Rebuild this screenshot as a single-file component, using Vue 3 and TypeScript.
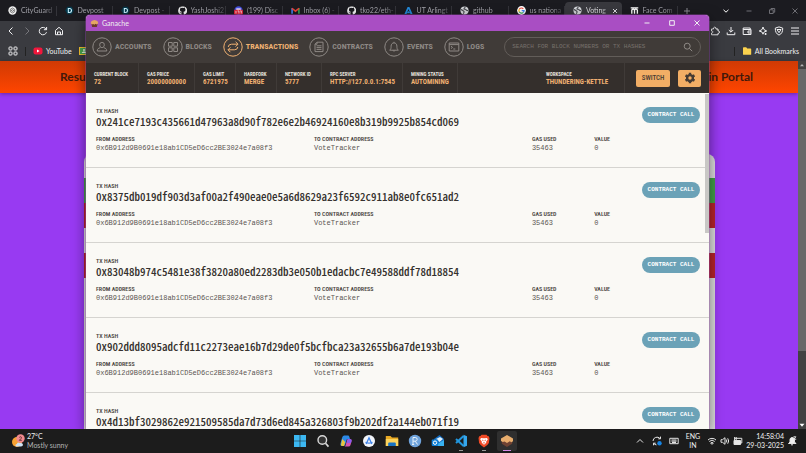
<script setup lang="ts">
interface Tab { title: string; icon: string; active?: boolean }
interface NavItem { label: string; paths: string; active?: boolean }
interface Stat { label: string; value: string }

const tabs: Tab[] = [
  { title: 'CityGuard', icon: 'gpt' },
  { title: 'Devpost', icon: 'devpost' },
  { title: 'Devpost -', icon: 'devpost' },
  { title: 'YashJoshi2', icon: 'github' },
  { title: '(199) Disc', icon: 'badge' },
  { title: 'Inbox (6) -', icon: 'gmail' },
  { title: 'tko22/eth-', icon: 'github' },
  { title: 'UT Arlingt', icon: 'uta' },
  { title: 'github', icon: 'globe' },
  { title: 'us nationa', icon: 'google' },
  { title: 'Voting', icon: 'globe', active: true },
  { title: 'Face Com', icon: 'face' },
]

const nav: NavItem[] = [
  { label: 'Accounts', paths: 'M10 5.4a2.3 2.3 0 0 1 2.3 2.5c0 1.5-1 2.7-2.3 2.7s-2.3-1.2-2.3-2.7A2.3 2.3 0 0 1 10 5.4ZM8.4 10.6c-2 .7-3 1-3.2 3.4h9.6c-.2-2.4-1.2-2.7-3.2-3.4' },
  { label: 'Blocks', paths: 'M5.5 5.5h3.7v3.7H5.5zM10.8 5.5h3.7v3.7h-3.7zM5.5 10.8h3.7v3.7H5.5zM10.8 10.8h3.7v3.7h-3.7z' },
  { label: 'Transactions', paths: 'M12.6 4.8l2.4 2.4-2.4 2.4M15 7.2H8.600Q5.400 7.200 5.200 10M7.400 10.400L5 12.800l2.400 2.400M5 12.800h6.400q3.200 0 3.400-2.800', active: true },
  { label: 'Contracts', paths: 'M8 5.2h6v9.4H6V7.2zM8 5.2v2H6M7.500 8.800h5M7.500 10.600h5M7.500 12.400h5' },
  { label: 'Events', paths: 'M10 4.8v1M5.600 13.200c1.400-1.200 1.500-2 1.500-4 0-2 1.100-3.300 2.900-3.300s2.900 1.300 2.900 3.300c0 2 .1 2.800 1.500 4zM8.900 13.400a1.200 1.200 0 0 0 2.200 0' },
  { label: 'Logs', paths: 'M5.2 6h9.6v8H5.200zM5.200 7.600h9.600M7 9.200l1.500 1.200L7 11.600M9.300 12h2' },
]

const stats: Stat[] = [
  { label: 'Current Block', value: '72' },
  { label: 'Gas Price', value: '20000000000' },
  { label: 'Gas Limit', value: '6721975' },
  { label: 'Hardfork', value: 'MERGE' },
  { label: 'Network ID', value: '5777' },
  { label: 'RPC Server', value: 'HTTP://127.0.0.1:7545' },
  { label: 'Mining Status', value: 'AUTOMINING' },
  { label: 'Workspace', value: 'THUNDERING-KETTLE' },
]

const sender = '0x6B912d9B0691e18ab1CD5eD6cc2BE3024e7a08f3'
const hashes = [
  '0x241ce7193c435661d47963a8d90f782e6e2b46924160e8b319b9925b854cd069',
  '0x8375db019df903d3af00a2f490eae0e5a6d8629a23f6592c911ab8e0fc651ad2',
  '0x83048b974c5481e38f3820a80ed2283db3e050b1edacbc7e49588ddf78d18854',
  '0x902ddd8095adcfd11c2273eae16b7d29de0f5bcfbca23a32655b6a7de193b04e',
  '0x4d13bf3029862e921509585da7d73d6ed845a326803f9b202df2a144eb071f19',
]
</script>

<template>
  <div class="desktop">
    <div class="workspace">
      <div class="browser">
        <header class="tabbar">
          <div class="tabs">
            <div v-for="(tab, i) in tabs" :key="i" class="tab" :class="{ active: tab.active }">
              <svg class="favicon" viewBox="0 0 10 10">
                <template v-if="tab.icon === 'gpt'">
                  <circle cx="5" cy="5" r="4.6" fill="#f1f1f1" />
                  <path d="M5 2.200l2.400 1.400v2.800L5 7.800 2.600 6.400V3.600zM5 3.800l1 .6v1.200l-1 .6-1-.6V4.400z" fill="none" stroke="#444" stroke-width=".7" />
                </template>
                <template v-else-if="tab.icon === 'devpost'">
                  <path d="M2.600.8h4.800L9.800 5 7.400 9.200H2.600L.2 5z" fill="#063a4c" />
                  <path d="M3.700 2.800H5a2.200 2.200 0 0 1 0 4.400H3.700z" fill="none" stroke="#c9f2ff" stroke-width="1.2" />
                </template>
                <path v-else-if="tab.icon === 'github'" d="M5 .5a4.600 4.600 0 0 0-1.500 9c.3 0 .4-.2.400-.4v-1c-1.200.3-1.600-.4-1.700-.9-.2-.4-.5-.6-.8-.8.500-.2.900.1 1.200.6.300.5.800.5 1.400.3 0-.3.200-.6.400-.7-1.500-.2-2.300-.9-2.300-2.300 0-.6.200-1.100.6-1.500-.1-.4 0-.9.100-1.200.5 0 1 .3 1.300.5a4 4 0 0 1 2.200 0c.4-.2.800-.5 1.300-.5.200.4.200.9.100 1.200.4.400.6.900.6 1.500 0 1.400-.8 2.100-2.300 2.300.3.200.4.600.4 1.100v1.400c0 .2.100.4.400.4A4.600 4.600 0 0 0 5 .5" fill="#f2f2f2" />
                <template v-else-if="tab.icon === 'badge'">
                  <circle cx="5" cy="5" r="4.6" fill="#4450e0" />
                  <path d="M2.500 2.600h5v2h-5z" fill="#e8e8ff" />
                  <rect y="4.3" width="10" height="5.2" rx="1.5" fill="#e22438" />
                  <path d="M2.200 5.500v2.800M4 5.500h1.500v2.800M6.900 5.500h1.200v2.800" stroke="#fff" stroke-width=".8" fill="none" />
                </template>
                <template v-else-if="tab.icon === 'gmail'">
                  <path d="M1.200 8.500V2.600" stroke="#4285f4" stroke-width="1.8" />
                  <path d="M8.800 8.500V2.600" stroke="#34a853" stroke-width="1.8" />
                  <path d="M1 2.500l4 3.300 4-3.300" stroke="#ea4335" stroke-width="1.8" fill="none" />
                </template>
                <path v-else-if="tab.icon === 'uta'" d="M.5 9L4 1h2l3.500 8H7.200L5 3.400 2.800 9zM5 5.500L7 8H3z" fill="#2389d8" />
                <template v-else-if="tab.icon === 'globe'">
                  <circle cx="5" cy="5" r="4.5" fill="#d4d6da" />
                  <path d="M1 4c2 0 1.600 1.500 3 1.700.9.300.5 1.600-.3 2.900M5.800 1C5.500 2.500 4 2.300 4.400 3.300s2-.3 2.200.8c.2 1.200 1.200.9 2.300 1" fill="none" stroke="#45474c" stroke-width="1.2" />
                </template>
                <template v-else-if="tab.icon === 'google'">
                  <circle cx="5" cy="5" r="4.9" fill="#fff" />
                  <path d="M7 3A2.900 2.900 0 0 0 2.500 3.700" stroke="#ea4335" fill="none" stroke-width="1.3" />
                  <path d="M2.500 3.700a2.900 2.900 0 0 0 0 2.700" stroke="#fbbc04" fill="none" stroke-width="1.3" />
                  <path d="M2.500 6.400A2.900 2.900 0 0 0 7 7.100" stroke="#34a853" fill="none" stroke-width="1.3" />
                  <path d="M7 7.100Q7.900 6.400 7.900 5.100H5.200" stroke="#4285f4" fill="none" stroke-width="1.3" />
                </template>
                <path v-else d="M2 8.500V4.600q0-1.200 1.500-1.200T5 4.600v3.900M5 4.600q0-1.200 1.500-1.200T8.200 4.600v3.900M.8 2h8.400" fill="none" stroke="#fff" stroke-width="1.5" />
              </svg>
              <span class="tab-title">{{ tab.title }}</span>
              <button v-if="tab.active" class="tab-close" aria-label="Close tab">
                <svg viewBox="0 0 6 6"><path d="M1 1l4 4M5 1L1 5" /></svg>
              </button>
            </div>
            <button class="new-tab" aria-label="New tab">
              <svg viewBox="0 0 8 8"><path d="M4 1v6M1 4h6" /></svg>
            </button>
          </div>
          <div class="frame-controls">
            <button class="bright" aria-label="Search tabs"><svg viewBox="0 0 8 8"><path d="M1.500 2.800L4 5.200l2.500-2.400" /></svg></button>
            <button aria-label="Minimize browser"><svg viewBox="0 0 8 8"><path d="M1.500 4h5" /></svg></button>
            <button aria-label="Restore browser"><svg viewBox="0 0 8 8"><path d="M1.500 2.800h3.700v3.700H1.500zM3 2.800V1.500h3.700v3.700H5.200" /></svg></button>
            <button aria-label="Close browser"><svg viewBox="0 0 8 8"><path d="M1.500 1.500l5 5M6.500 1.500l-5 5" /></svg></button>
          </div>
        </header>

        <div class="toolbar">
          <div class="tools">
            <button aria-label="Back"><svg viewBox="0 0 10 10"><path d="M6.500 1.500L3 5l3.500 3.500" /></svg></button>
            <button class="dim" aria-label="Forward"><svg viewBox="0 0 10 10"><path d="M3.500 1.500L7 5 3.500 8.500" /></svg></button>
            <button aria-label="Reload"><svg viewBox="0 0 10 10"><path d="M8.300 3.500A3.700 3.700 0 1 0 8.500 6.200M8.600 1v2.700H5.900" /></svg></button>
            <button aria-label="Home"><svg viewBox="0 0 10 10"><path d="M1.500 4.400L5 1.300l3.500 3.100v4.300h-7zM3.500 8.700V6h3v2.700" /></svg></button>
          </div>
          <div class="tools">
            <button aria-label="Extensions"><svg viewBox="0 0 10 10"><path d="M1.500 3h2c-.5-2.400 3-2.400 2.500 0h2v2c2-.5 2 2.800 0 2.300v1.500H1.500V7c1.800.2 1.800-2.300 0-2z" /></svg></button>
            <button aria-label="Downloads"><svg viewBox="0 0 10 10"><path d="M5 1v5M2.800 4L5 6.200 7.200 4M1.200 6.500v2.200h7.600V6.500" /></svg></button>
            <button aria-label="Wallet"><svg viewBox="0 0 10 10"><path d="M1.200 2h7v1.500H9v5H1.200zM1.200 3.500h7M9 5H6v2h3" /></svg></button>
            <button aria-label="Leo"><svg viewBox="0 0 10 10"><path d="M5 1l1 2.600L8.700 5 6 6 5 8.200 4 6 1.200 5 4 3.600zM7.600 7v2M6.600 8h2" /></svg></button>
            <button aria-label="VPN"><svg viewBox="0 0 10 10"><path d="M5 .9l3.700 1.200c.1 3.500-.9 5.700-3.700 7C2.200 7.800 1.200 5.600 1.300 2.100zM3 3.500h4L5 6.700z" /></svg></button>
            <button aria-label="Menu"><svg viewBox="0 0 10 10"><path d="M1 2h8M1 5h8M1 8h8" /></svg></button>
          </div>
        </div>

        <div class="bookmarks">
          <div class="bookmark-group">
            <svg class="apps" viewBox="0 0 10 10"><rect x="1" y="1" width="3" height="3" rx=".8" /><rect x="6" y="1" width="3" height="3" rx=".8" /><rect x="1" y="6" width="3" height="3" rx=".8" /><rect x="6" y="6" width="3" height="3" rx=".8" /></svg>
            <i class="divider"></i>
            <a href="#">
              <svg viewBox="0 0 10 10"><rect x=".5" y="1.5" width="9" height="7" rx="2" fill="#f0173c" /><path d="M4 3.500L6.600 5 4 6.500z" fill="#fff" /></svg>
              YouTube
            </a>
            <a href="#" aria-label="Classroom">
              <svg viewBox="0 0 10 10"><path d="M0 1h10v8H0z" fill="#f2c230" /><path d="M1 2h8v6H1z" fill="#4aa84e" /><path d="M5 3a1 1 0 0 1 0 2 1 1 0 0 1 0-2M2.800 7c.3-2 4-2 4.400 0z" fill="#e8f5e0" /></svg>
            </a>
          </div>
          <div class="bookmark-group">
            <i class="divider"></i>
            <a href="#">
              <svg viewBox="0 0 10 10"><path d="M1 2q0-.7.7-.7h2.500l1 1.200h3.300q.7 0 .7.700v5q0 .6-.7.600H1.700Q1 8.800 1 8.200z" fill="#fbd24e" /></svg>
              All Bookmarks
            </a>
          </div>
        </div>

        <div class="viewport">
          <main class="page">
            <div class="page-header"><span>Results</span><span>Admin Portal</span></div>
            <section class="card">
              <div class="band green"></div>
              <div class="band red"></div>
              <div class="band"></div>
              <div class="band red"></div>
            </section>
          </main>
          <div class="page-scroll">
            <svg viewBox="0 0 8 8"><path d="M2 5.200L4 3l2 2.200z" /></svg>
            <div class="track"><div class="thumb"></div></div>
            <svg viewBox="0 0 8 8"><path d="M1.500 2.800h5L4 5.800z" /></svg>
          </div>
        </div>
      </div>

      <section class="ganache">
        <header class="titlebar">
          <svg class="app-icon" viewBox="0 0 10 10"><path d="M1.500 5h7L7.600 9H2.400z" fill="#6b3a2a" /><path d="M.8 4.800Q1 1.500 5 1q4 .5 4.200 3.800L7.500 6l-1.400-.6L5 6.400 3.500 5.500 2.200 6z" fill="#e5a663" /></svg>
          <span>Ganache</span>
          <div class="window-controls">
            <button aria-label="Minimize"><svg viewBox="0 0 8 8"><path d="M1.500 4h5" /></svg></button>
            <button aria-label="Maximize"><svg viewBox="0 0 8 8"><path d="M1.700 1.700h4.600v4.600H1.700z" /></svg></button>
            <button aria-label="Close"><svg viewBox="0 0 8 8"><path d="M1.500 1.500l5 5M6.500 1.500l-5 5" /></svg></button>
          </div>
        </header>

        <div class="appbar">
          <nav>
            <a v-for="item in nav" :key="item.label" href="#" :class="{ active: item.active }">
              <svg viewBox="0 0 20 20"><circle cx="10" cy="10" r="9.2" /><path :d="item.paths" /></svg>
              {{ item.label }}
            </a>
          </nav>
          <div class="search">
            <input type="text" aria-label="Search" placeholder="SEARCH FOR BLOCK NUMBERS OR TX HASHES" />
            <svg viewBox="0 0 10 10"><circle cx="4.2" cy="4.2" r="3" /><path d="M6.400 6.400L9.200 9.200" /></svg>
          </div>
        </div>

        <div class="status">
          <div v-for="s in stats" :key="s.label" class="stat">
            <span class="stat-label">{{ s.label }}</span>
            <span class="stat-value">{{ s.value }}</span>
          </div>
          <div class="actions">
            <button class="switch">SWITCH</button>
            <button class="settings" aria-label="Settings">
              <svg viewBox="0 0 12 12"><circle cx="6" cy="6" r="2.9" fill="none" stroke="#453b33" stroke-width="2.4" /><path d="M6 .8v2M6 9.200v2M1.500 3.400l1.700 1M8.800 7.600l1.700 1M1.500 8.600l1.700-1M8.800 4.400l1.700-1" stroke="#453b33" stroke-width="2.4" /></svg>
            </button>
          </div>
        </div>

        <div class="list">
          <article v-for="hash in hashes" :key="hash" class="tx">
            <div class="tx-top">
              <div>
                <div class="label">TX HASH</div>
                <div class="hash">{{ hash }}</div>
              </div>
              <span class="pill">CONTRACT CALL</span>
            </div>
            <div class="tx-details">
              <div>
                <div class="label">FROM ADDRESS</div>
                <div class="value">{{ sender }}</div>
              </div>
              <div>
                <div class="label">TO CONTRACT ADDRESS</div>
                <div class="value">VoteTracker</div>
              </div>
              <div>
                <div class="label">GAS USED</div>
                <div class="value">35463</div>
              </div>
              <div>
                <div class="label">VALUE</div>
                <div class="value">0</div>
              </div>
            </div>
          </article>
          <div class="list-thumb"></div>
        </div>
      </section>
    </div>

    <footer class="taskbar">
      <div class="weather">
        <svg viewBox="0 0 14 14"><circle cx="6" cy="8" r="5" fill="#f7a233" /><path d="M5 12.500q-1.500-2 .8-2.600 1-2.400 3.300-.8 2.800-.4 2.900 1.700 0 1.700-2 1.700z" fill="#cfe2f5" /><circle cx="9.5" cy="4.5" r="4.2" fill="#f08a8f" /><path d="M8.300 3.400q1.200-1.300 2.100-.2.500 1-2.100 3.100h2.500" stroke="#4b2226" fill="none" stroke-width=".8" /></svg>
        <div><div class="temp">27°C</div><div class="sky">Mostly sunny</div></div>
      </div>

      <div class="apps-row">
        <button aria-label="Start"><svg viewBox="0 0 14 14"><path d="M1 1h5.700v5.700H1zM7.300 1H13v5.700H7.300zM1 7.300h5.700V13H1zM7.300 7.300H13V13H7.300z" fill="#3cb8f2" /></svg></button>
        <button aria-label="Search"><svg viewBox="0 0 14 14"><circle cx="6.3" cy="6" r="4.3" fill="#333" stroke="#d8d8d8" stroke-width="1.4" /><path d="M9.500 9.300l3 3.300" stroke="#d8d8d8" stroke-width="1.7" /></svg></button>
        <button aria-label="Copilot"><svg viewBox="0 0 14 14"><path d="M5 1.500h4q1 0 1.400 1.400L11 5H8L6 11q-.4 1-1.400 1H3q-2 0-1.500-2.500L3 4q.6-2.500 2-2.500z" fill="#2c8ae8" /><path d="M3.200 5L2 10.500Q1.700 12 3.400 12H5l1.200-4z" fill="#e9c63d" /><path d="M8.500 5h2.600q1.800 0 1.500 2L11.500 11q-.5 1.500-2 1.500H5.500q.8-.3 1-1z" fill="#d553b3" /><path d="M9 5h2q1.800 0 1.600 1.500L12 9H7.700z" fill="#8b5cf0" /></svg></button>
        <button aria-label="Android Studio"><svg viewBox="0 0 14 14"><circle cx="7" cy="7" r="6" fill="#f2f5fa" /><path d="M4.200 10L7 3.800 9.800 10M3.500 8.300q3.500 1.500 7 0" stroke="#4285e8" stroke-width="1.3" fill="none" /></svg></button>
        <button aria-label="File Explorer"><svg viewBox="0 0 14 14"><path d="M.8 2h4.700L7 3.500h6.200V12H.8z" fill="#e9a924" /><path d="M.8 5h12.400v7H.8z" fill="#fcd35c" /><path d="M3.200 12V9.500q0-1 1-1h5.600q1 0 1 1V12z" fill="#1873c4" /></svg></button>
        <button aria-label="RStudio"><svg viewBox="0 0 14 14"><circle cx="7" cy="7" r="6.2" fill="#6fa3dc" /><path d="M5 10.500v-7h2.200q2 0 2 1.800T7.200 7.200H5M7.200 7.200l2.400 3.300M4 10.500h2.200" stroke="#e9f2fb" fill="none" /></svg></button>
        <button aria-label="Outlook"><svg viewBox="0 0 14 14"><path d="M3 5l5.500-4L13 5v7H3z" fill="#1369bd" /><path d="M5 5l4-2 3 2-3.500 3z" fill="#dff1fc" /><path d="M3 12l10-6v6z" fill="#38b2f2" /><rect x=".7" y="5.5" width="6.5" height="6.5" rx="1" fill="#1080d8" /><circle cx="4" cy="8.7" r="1.7" fill="none" stroke="#fff" /></svg></button>
        <button aria-label="Visual Studio Code" class="running"><svg viewBox="0 0 14 14"><path d="M9.600 2L2 9M9.600 12L2 5" stroke="#2196de" stroke-width="2" /><path d="M9.500.8L13 2.300v9.400l-3.500 1.500z" fill="#35a7ee" /></svg></button>
        <button aria-label="Brave" class="running"><svg viewBox="0 0 14 14"><path d="M4.500.8h5l1 1.200h1l1 2-.6 5Q11 11 7 13.400 3 11 2.100 9L1.500 4l1-2h1z" fill="#f04a26" /><path d="M4 4l2 .3h2L10 4l.8 1.500-1.700 2.300.2 1L7 10.800 4.700 8.800l.2-1-1.700-2.300z" fill="#fff" /><path d="M5 6l1.500.7M9 6l-1.500.7M6 8.500l1 .7 1-.7" stroke="#f04a26" fill="none" stroke-width=".8" /></svg></button>
        <button aria-label="Ganache" class="running current"><svg viewBox="0 0 14 14"><path d="M1.800 6.500h10.400v3.200L7 13 1.800 9.700z" fill="#6e4233" /><path d="M1 4.500L7 1l6 3.500v2.700l-1.700 1-1.500-1L7 9 4.600 7.500 2.800 8 1 7z" fill="#e8ad6d" /></svg></button>
      </div>

      <div class="tray">
        <svg viewBox="0 0 10 10"><path d="M2 6.500l3-3 3 3" /></svg>
        <svg class="gap" viewBox="0 0 10 10"><path d="M1 5A4 4 0 0 1 8 2.500M8.500.6v2.200H6.300M1.500 9.300V7.200h2.200M1.700 7.300a4 4 0 0 0 2.800 1.600" /><circle cx="7.5" cy="7.3" r="2.2" fill="#1584e4" stroke="none" /></svg>
        <svg class="gap" viewBox="0 0 10 10"><path d="M.8 2.300h8.400v5.400H.8zM2.500 4h5M2.500 5.200h5M3 6.500h4" /></svg>
        <div class="language"><div>ENG</div><div>IN</div></div>
        <svg viewBox="0 0 10 10"><path d="M1 4a5.700 5.700 0 0 1 8 0M2.300 5.500a3.800 3.800 0 0 1 5.400 0M3.700 7a1.900 1.900 0 0 1 2.600 0L5 8.400z" /></svg>
        <svg viewBox="0 0 10 10"><path d="M1 3.700h1.500L5 1.700v6.600L2.500 6.300H1zM6.300 3.500q1 1.500 0 3M7.700 2.300q2 2.700 0 5.400" /></svg>
        <svg viewBox="0 0 10 10"><path d="M1 4.500h6.500v4H1z" fill="#e8e8e8" /><path d="M2 2.300h6.800V7H8M1.600 1v3.500M3.200 1v3" /></svg>
        <div class="clock"><div>14:58:04</div><div>29-03-2025</div></div>
        <svg viewBox="0 0 10 10"><path d="M1.500 7.500L3 6V3.200q.4-1.500 2-1.700 2.300 0 2.500 2V6L9 7.500z" fill="#f0f0f0" /><path d="M4 8.800h2M6.500.8h2.400L6.700 3.200h2.500" /></svg>
      </div>
    </footer>
  </div>
</template>

<style>
body {
  margin: 0;
  background: #983af2;
}
</style>

<style scoped>
* {
  box-sizing: border-box;
}
.desktop {
  display: flex;
  flex-direction: column;
  height: 100vh;
  overflow: hidden;
  font-family: Lato, "Noto Sans", sans-serif;
  font-size: 7px;
  line-height: 9px;
  color: #f0f0f2;
}
button {
  display: grid;
  place-items: center;
  padding: 0;
  border: 0;
  background: none;
  color: inherit;
  font: inherit;
}
a {
  color: inherit;
  text-decoration: none;
}
svg {
  display: block;
  flex: none;
}
.workspace {
  position: relative;
  flex: 1;
  min-height: 0;
  overflow: hidden;
}
.browser {
  display: flex;
  flex-direction: column;
  height: 100%;
}
.tabbar {
  display: flex;
  justify-content: space-between;
  height: 21px;
  flex: none;
  background: #1b1b20;
}
.tabs {
  display: flex;
  align-items: center;
  min-width: 0;
  flex: 0 1 696px;
}
.tab {
  display: flex;
  align-items: center;
  gap: 4px;
  flex: 1 1 0;
  min-width: 0;
  height: 18px;
  padding: 0 4px 0 8px;
  background: linear-gradient(#34343a, #34343a) right center / 1px 10px no-repeat;
  color: #a3a3aa;
}
.tab.active {
  border-radius: 4px;
  background: #39393e;
  color: #dcdce0;
}
.favicon {
  width: 9px;
  height: 9px;
}
.tab-title {
  flex: 1;
  white-space: nowrap;
  mask-image: linear-gradient(90deg, #000 70%, #0005);
}
.tab-close svg {
  width: 6px;
  height: 6px;
}
.new-tab {
  width: 18px;
  color: #8a8a90;
}
.new-tab svg {
  width: 8px;
  height: 8px;
}
.tab-close svg,
.new-tab svg,
.frame-controls svg,
.tools svg,
.window-controls svg,
.apps {
  fill: none;
  stroke: currentColor;
  stroke-width: 1;
}
.frame-controls {
  display: flex;
  color: #6e6e74;
}
.frame-controls button {
  width: 23px;
}
.frame-controls svg {
  width: 8px;
  height: 8px;
}
.frame-controls .bright {
  color: #fff;
}
.toolbar,
.bookmarks {
  display: flex;
  align-items: center;
  justify-content: space-between;
  height: 20px;
  flex: none;
  padding: 0 3px;
  background: #3a3b40;
}
.tools {
  display: flex;
}
.tools button {
  width: 16px;
}
.tools svg {
  width: 10px;
  height: 10px;
}
.tools .dim {
  color: #77777c;
}
.bookmarks {
  padding: 0 7px 0 8px;
}
.bookmark-group,
.bookmark-group a {
  display: flex;
  align-items: center;
}
.bookmark-group {
  gap: 7px;
}
.bookmark-group a {
  gap: 3px;
}
.bookmark-group svg {
  width: 10px;
  height: 10px;
}
.divider {
  width: 1px;
  height: 9px;
  background: #222;
}
.viewport {
  display: flex;
  flex: 1;
  min-height: 0;
}
.page {
  display: flex;
  flex-direction: column;
  flex: 1;
  background: #983af2;
}
.page-header {
  display: flex;
  align-items: center;
  justify-content: space-between;
  height: 32px;
  padding: 0 45px 0 60px;
  background: linear-gradient(#cf3a04, #ff4500);
  color: #43190b;
  font: 700 12px/16px Lato, sans-serif;
  box-shadow: 0 1px 4px #0005;
}
.card {
  flex: 1;
  margin: 61px 83px 0 84px;
  padding-top: 24px;
  border-radius: 8px 8px 0 0;
  background: #dedede;
}
.band {
  height: 25px;
}
.green {
  background: #43a047;
}
.red {
  background: #b9252b;
}
.page-scroll {
  display: flex;
  flex-direction: column;
  width: 8px;
  background: #424242;
}
.page-scroll svg {
  width: 8px;
  height: 8px;
  fill: #b4b4b4;
}
.page-scroll svg:last-child {
  fill: #fff;
}
.track {
  flex: 1;
}
.thumb {
  height: 80%;
  background: #686868;
}

/* Ganache window floating above the browser */
.ganache {
  position: absolute;
  inset: 15px 97px 0 86px;
  display: flex;
  flex-direction: column;
  border-radius: 4px 4px 0 0;
  overflow: hidden;
  background: #faf9f5;
  box-shadow: 0 0 0 1px #a94fc455, 0 4px 14px #0008;
}
.titlebar {
  display: flex;
  align-items: center;
  gap: 3px;
  height: 16px;
  flex: none;
  padding-left: 4px;
  background: #a94ec3;
}
.app-icon {
  width: 9px;
  height: 9px;
}
.window-controls {
  display: flex;
  margin-left: auto;
}
.window-controls button {
  width: 25px;
  height: 16px;
}
.window-controls svg {
  width: 8px;
  height: 8px;
}
.appbar {
  display: flex;
  align-items: center;
  gap: 20px;
  height: 32px;
  flex: none;
  padding: 0 8px 0 6px;
  background: #403b38;
}
nav {
  display: flex;
  gap: 11px;
}
nav a {
  display: flex;
  align-items: center;
  gap: 3px;
  color: #8e8985;
  font: 700 8px/10px "Roboto Condensed", "Liberation Sans Narrow", Roboto, sans-serif;
  text-transform: uppercase;
}
nav a.active {
  color: #f0b172;
}
nav svg {
  width: 20px;
  height: 20px;
  fill: none;
  stroke: currentColor;
}
.search {
  display: flex;
  align-items: center;
  flex: 1;
  height: 20px;
  margin-left: auto;
  padding: 0 7px;
  border: 1px solid #625d59;
  border-radius: 10px;
}
.search input {
  flex: 1;
  min-width: 0;
  padding: 0;
  border: 0;
  outline: 0;
  background: none;
  color: #d8d2cc;
  font: 6px/8px "Liberation Mono", monospace;
}
.search input::placeholder {
  color: #76706b;
  opacity: 1;
}
.search svg {
  width: 10px;
  height: 10px;
  fill: none;
  stroke: #8e8985;
}
.status {
  display: grid;
  grid-template-columns: 53px 56px 41px 41px 45px 81px 55px 1fr auto;
  height: 30px;
  flex: none;
  background: #342f2c;
}
.stat {
  display: flex;
  flex-direction: column;
  justify-content: center;
  gap: 1px;
  padding-left: 8px;
  border-right: 1px solid #403b38;
  font: 700 7px/8px "Roboto Condensed", "Liberation Sans Narrow", Roboto, sans-serif;
  white-space: nowrap;
}
.stat:nth-child(8) {
  padding-left: 88px;
}
.stat-label {
  font-size: 5px;
  line-height: 6px;
  text-transform: uppercase;
  color: #e6e1dc;
}
.stat-value {
  color: #f0b172;
}
.actions {
  display: flex;
  align-items: center;
  gap: 8px;
  padding: 0 8px 0 11px;
}
.actions button {
  height: 17px;
  border-radius: 2px;
  background: #f2ae65;
  color: #453b33;
  font: 500 7px/8px "Roboto Condensed", "Liberation Sans Narrow", Roboto, sans-serif;
}
.actions .switch {
  width: 34px;
}
.actions .settings {
  width: 23px;
}
.settings svg {
  width: 12px;
  height: 12px;
}
.list {
  position: relative;
  flex: 1;
  min-height: 0;
  overflow: hidden;
}
.tx {
  height: 75px;
  padding: 14px 9px 0 10px;
  border-bottom: 1px solid #d5d4d0;
  color: #4a4642;
}
.tx-top {
  display: flex;
  justify-content: space-between;
}
.label {
  font: 600 6px/8px "Roboto Condensed", "Liberation Sans Narrow", Roboto, sans-serif;
}
.hash {
  font: 500 11px/13px "Noto Sans CJK SC", monospace;
  font-feature-settings: "hwid";
  color: #35312e;
  white-space: nowrap;
}
.pill {
  height: 16px;
  width: 58px;
  border-radius: 8px;
  background: #6ba2b7;
  color: #fff;
  font: 700 6px/16px "Liberation Mono", monospace;
  text-align: center;
}
.tx-details {
  display: grid;
  grid-template-columns: 35fr 35fr 10fr 17fr;
  margin-top: 7px;
}
.value {
  font: 7px/10px "Liberation Mono", monospace;
  color: #5a5652;
}
.list-thumb {
  position: absolute;
  top: 1px;
  right: 0;
  width: 4px;
  height: 139px;
  background: #c8c7c5;
}

.taskbar {
  display: grid;
  grid-template-columns: 1fr auto 1fr;
  align-items: center;
  height: 24px;
  flex: none;
  background: #1c1c1c;
}
.weather {
  display: flex;
  align-items: center;
  gap: 2px;
  padding-left: 11px;
}
.weather svg {
  width: 14px;
  height: 14px;
}
.sky {
  color: #b4b4b4;
}
.apps-row {
  display: flex;
  gap: 3px;
}
.apps-row button {
  position: relative;
  width: 20px;
  height: 20px;
  border-radius: 2px;
}
.apps-row svg {
  width: 14px;
  height: 14px;
}
.apps-row .current {
  background: #2f2f2f;
}
.running::after {
  content: "";
  position: absolute;
  bottom: 0;
  left: 8px;
  width: 4px;
  height: 1px;
  background: #999;
}
.current::after {
  left: 6px;
  width: 8px;
  background: #d58ae6;
}
.tray {
  display: flex;
  align-items: center;
  justify-content: flex-end;
  gap: 3px;
  padding-right: 9px;
}
.tray svg {
  width: 10px;
  height: 10px;
  fill: none;
  stroke: #e4e4e4;
}
.tray .gap {
  margin-left: 4px;
}
.language {
  width: 22px;
  text-align: center;
}
.clock {
  width: 38px;
  text-align: right;
}
</style>
